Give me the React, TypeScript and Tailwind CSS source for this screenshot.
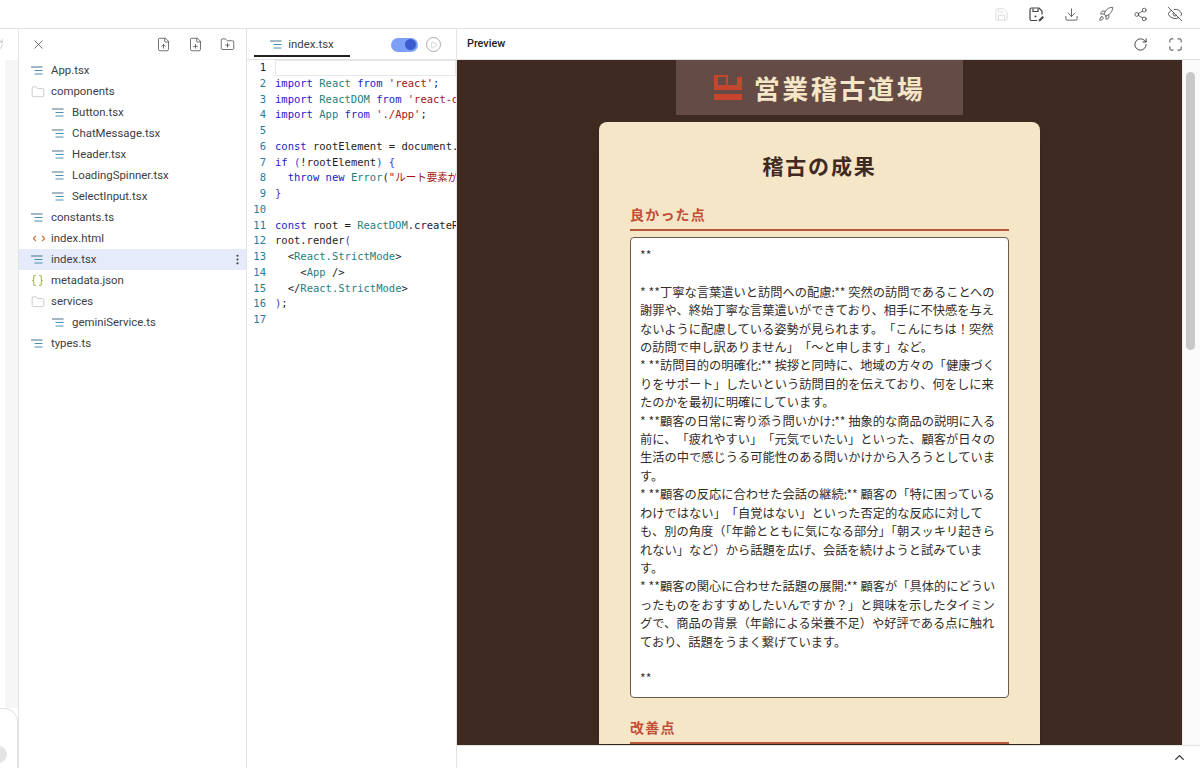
import { Braces, ChevronLeft, ChevronRight, ChevronUp, Download, EyeOff, FilePlus, FileUp, Folder, FolderPlus, Maximize, MoreVertical, Play, RotateCw, Rocket, Save, Share2, X } from "lucide-react";
import type { ReactNode } from "react";

const LinesIcon = () => (
  <svg width="13" height="9" viewBox="0 0 13 9" className="shrink-0" fill="none" strokeWidth="1.1">
    <path d="M0 1h11.5" stroke="#5a7f92" />
    <path d="M3.5 4.5h8M3.5 8h8" stroke="#4b92b0" />
  </svg>
);

const SaveEdit = () => (
  <svg width="17" height="17" viewBox="0 0 17 17" fill="none" stroke="#444" strokeWidth="1.2" className="shrink-0">
    <path d="M9 14.5H3.5a1.5 1.5 0 0 1-1.5-1.5V3.5A1.5 1.5 0 0 1 3.5 2h7.5l3 3v3.5" />
    <path d="M5 2.5v3h5v-3" />
    <circle cx="7.5" cy="10.5" r="1" fill="#444" stroke="none" />
    <path d="M10.5 15.5l.5-2 3.5-3.5 1.5 1.5-3.5 3.5z" fill="#444" stroke="none" />
  </svg>
);

type Row = { name: string; depth: number; kind: "ts" | "folder" | "html" | "json"; active?: boolean };
const rows: Row[] = [
  { name: "App.tsx", depth: 0, kind: "ts" },
  { name: "components", depth: 0, kind: "folder" },
  { name: "Button.tsx", depth: 1, kind: "ts" },
  { name: "ChatMessage.tsx", depth: 1, kind: "ts" },
  { name: "Header.tsx", depth: 1, kind: "ts" },
  { name: "LoadingSpinner.tsx", depth: 1, kind: "ts" },
  { name: "SelectInput.tsx", depth: 1, kind: "ts" },
  { name: "constants.ts", depth: 0, kind: "ts" },
  { name: "index.html", depth: 0, kind: "html" },
  { name: "index.tsx", depth: 0, kind: "ts", active: true },
  { name: "metadata.json", depth: 0, kind: "json" },
  { name: "services", depth: 0, kind: "folder" },
  { name: "geminiService.ts", depth: 1, kind: "ts" },
  { name: "types.ts", depth: 0, kind: "ts" },
];

const K = ({ children }: { children: ReactNode }) => <span className="text-[#2222c8]">{children}</span>;
const T = ({ children }: { children: ReactNode }) => <span className="text-[#267f7f]">{children}</span>;
const S = ({ children }: { children: ReactNode }) => <span className="text-[#a31515]">{children}</span>;
const B = ({ children }: { children: ReactNode }) => <span className="text-[#3a3ad0]">{children}</span>;

const code: ReactNode[] = [
  "",
  <><K>import</K> <T>React</T> <K>from</K> <S>'react'</S>;</>,
  <><K>import</K> <T>ReactDOM</T> <K>from</K> <S>'react-dom/client'</S>;</>,
  <><K>import</K> <T>App</T> <K>from</K> <S>'./App'</S>;</>,
  "",
  <><K>const</K> rootElement = document.getElementById(<S>'root'</S>);</>,
  <><K>if</K> <B>(</B>!rootElement<B>)</B> <B>{"{"}</B></>,
  <>{"  "}<K>throw</K> <K>new</K> <T>Error</T>(<S>"ルート要素が見つかりません"</S>);</>,
  <B>{"}"}</B>,
  "",
  <><K>const</K> root = <T>ReactDOM</T>.createRoot(rootElement);</>,
  <>root.render<B>(</B></>,
  <>{"  "}&lt;<T>React.StrictMode</T>&gt;</>,
  <>{"    "}&lt;<T>App</T> /&gt;</>,
  <>{"  "}&lt;/<T>React.StrictMode</T>&gt;</>,
  <><B>)</B>;</>,
  "",
];

const feedbackA = `**

* **丁寧な言葉遣いと訪問への配慮:** 突然の訪問であることへの謝罪や、終始丁寧な言葉遣いができており、相手に不快感を与えないように配慮している姿勢が見られます。「こんにちは！突然の訪問で申し訳ありません」「〜と申します」など。
* **訪問目的の明確化:** 挨拶と同時に、地域の方々の「健康づくりをサポート」したいという訪問目的を伝えており、何をしに来たのかを最初に明確にしています。
* **顧客の日常に寄り添う問いかけ:** 抽象的な商品の説明に入る前に、「疲れやすい」「元気でいたい」といった、顧客が日々の生活の中で感じうる可能性のある問いかけから入ろうとしています。
* **顧客の反応に合わせた会話の継続:** 顧客の「特に困っているわけではない」「自覚はない」といった否定的な反応に対しても、別の角度`;

const feedbackTrim = "（「年齢とともに気になる部分」「朝";

const feedbackB = `スッキリ起きられない」など）から話題を広げ、会話を続けようと試みています。
* **顧客の関心に合わせた話題の展開:** 顧客が「具体的にどういったものをおすすめしたいんですか？」と興味を示したタイミングで、商品の背景（年齢による栄養不足）や好評である点に触れており、話題をうまく繋げています。

**`;

const sans = "[font-family:Roboto,'Noto_Sans_CJK_JP',sans-serif]";

export default function App() {
  return (
    <div className={`flex h-[768px] w-[1200px] flex-col overflow-hidden bg-white text-[#3c4043] ${sans}`}>
      {/* top toolbar */}
      <div className="flex h-[29px] shrink-0 items-center justify-end gap-[19px] border-b border-[#e3e3e3] pr-[17px]">
        <Save size={15} strokeWidth={1.3} className="text-[#d5d5d5]" />
        <SaveEdit />
        <Download size={15} strokeWidth={1.3} className="text-[#444]" />
        <Rocket size={16} strokeWidth={1.2} className="text-[#444]" />
        <Share2 size={15} strokeWidth={1.3} className="text-[#444]" />
        <EyeOff size={16} strokeWidth={1.3} className="text-[#444]" />
      </div>

      <div className="flex min-h-0 flex-1">
        {/* sliver of the neighbouring panel */}
        <div className="flex w-[19px] shrink-0 flex-col border-r border-[#e3e3e3]">
          <div className="flex h-[31px] shrink-0 items-center overflow-hidden">
            <RotateCw size={13} strokeWidth={1.3} className="-ml-[9px] text-[#bbb]" />
          </div>
          <div className="ml-[5px] flex-1 bg-[#f6f6f6]" />
          <div className="flex h-[60px] shrink-0 items-end rounded-tr-[14px] border-t border-r border-[#e3e3e3] bg-white pb-[5px]">
            <div className="-ml-[10px] h-[17px] w-[17px] rounded-full bg-[#e4e4e4]" />
          </div>
        </div>

        {/* file tree */}
        <div className="flex w-[228px] shrink-0 flex-col border-r border-[#e3e3e3]">
          <div className="flex h-[31px] shrink-0 items-center pl-[12px] pr-[11px]">
            <X size={15} strokeWidth={1.2} className="text-[#444]" />
            <div className="ml-auto flex items-center gap-[17px]">
              <FileUp size={15} strokeWidth={1.2} className="text-[#444]" />
              <FilePlus size={15} strokeWidth={1.2} className="text-[#444]" />
              <FolderPlus size={15} strokeWidth={1.2} className="text-[#444]" />
            </div>
          </div>
          <div className="flex flex-col">
            {rows.map((r) => (
              <div
                key={r.name}
                className={`flex h-[21px] items-center text-[11.4px] ${r.depth ? "pl-[33px]" : "pl-[12px]"} ${r.active ? "bg-[#e6ebfb]" : ""}`}
              >
                <span className="flex w-[20px] shrink-0 items-center">
                  {r.kind === "ts" && <LinesIcon />}
                  {r.kind === "folder" && <Folder size={14} strokeWidth={1} className="text-[#aaa]" />}
                  {r.kind === "html" && (
                    <span className="-ml-[1px] flex text-[#c9713d]">
                      <ChevronLeft size={9} strokeWidth={3} />
                      <ChevronRight size={9} strokeWidth={3} />
                    </span>
                  )}
                  {r.kind === "json" && <Braces size={13} strokeWidth={2} className="text-[#a8b84a]" />}
                </span>
                <span>{r.name}</span>
                {r.active && <MoreVertical size={13} strokeWidth={2} className="ml-auto mr-[2px] text-[#444]" />}
              </div>
            ))}
          </div>
        </div>

        {/* editor */}
        <div className="flex w-[210px] shrink-0 flex-col overflow-hidden border-r border-[#e3e3e3]">
          <div className="flex h-[31px] shrink-0 items-end border-b border-[#e3e3e3] pb-[2px] pl-[7px] pr-[15px]">
            <div className="flex h-[28px] w-[96px] items-center justify-center gap-[5px] border-b-2 border-[#222] pt-[5px] text-[11.4px]">
              <LinesIcon />
              index.tsx
            </div>
            <div className="mb-[5px] ml-auto flex items-center gap-[8px]">
              <div className="flex h-[14px] w-[27px] items-center justify-end rounded-full bg-[#7d9ff5] pr-[2px]">
                <div className="h-[11px] w-[11px] rounded-full bg-[#3b5bd0]" />
              </div>
              <div className="flex h-[15px] w-[15px] items-center justify-center rounded-full border border-[#aaa]">
                <Play size={8} strokeWidth={1.5} className="ml-[1px] text-[#aaa]" />
              </div>
            </div>
          </div>
          <div className="flex min-h-0 flex-1 overflow-hidden text-[10.5px] leading-[15.75px] [font-family:'DejaVu_Sans_Mono','Noto_Sans_CJK_JP',monospace]">
            <div className="w-[28px] shrink-0 pr-[9px] text-right text-[#2b7a96]">
              {code.map((_, i) => (
                <div key={i} className={i === 0 ? "text-[#0b216f]" : ""}>{i + 1}</div>
              ))}
            </div>
            <div className="min-w-0 flex-1 overflow-hidden">
              {code.map((c, i) => (
                <div
                  key={i}
                  className={`h-[15.75px] whitespace-pre text-[#1c1c1c] ${i === 0 ? "border border-[#e8e8e8]" : ""}`}
                >
                  {c}
                </div>
              ))}
            </div>
          </div>
        </div>

        {/* preview */}
        <div className="flex min-w-0 flex-1 flex-col">
          <div className="flex h-[31px] shrink-0 items-center border-b border-[#e3e3e3] pl-[10px] pr-[17px]">
            <span className="text-[10.8px] font-medium text-[#222]">Preview</span>
            <RotateCw size={15} strokeWidth={1.5} className="ml-auto text-[#333]" />
            <Maximize size={15} strokeWidth={1.5} className="ml-[20px] text-[#333]" />
          </div>
          <div className="flex min-h-0 flex-1">
            <div className="flex min-w-0 flex-1 flex-col items-center overflow-hidden bg-[#3e2a20]">
              <div className="flex h-[55px] w-[287px] shrink-0 items-center justify-center gap-[12px] bg-[#654b45]">
                <svg width="28" height="25" viewBox="0 0 28 25" className="shrink-0">
                  <path fill="#c8452d" fillRule="evenodd" d="M0 0h14v10h9V2h5v13H0zM4 2v8h8V2zM0 19h28v6H0z" />
                </svg>
                <span className="text-[26px] font-bold leading-none tracking-[2.6px] text-[#f5e6c8] [font-family:'Noto_Sans_CJK_JP',serif]">営業稽古道場</span>
              </div>
              <div className="mt-[7px] w-[441px] shrink-0 rounded-t-[8px] bg-[#f5e6c8] px-[31px] pt-[28px] shadow-lg [font-family:'Noto_Sans_CJK_JP',sans-serif]">
                <h2 className="text-center text-[21px] font-bold leading-[30px] tracking-[1.8px] text-[#3e2a20]">稽古の成果</h2>
                <h3 className="mt-[24px] border-b-2 border-[#b5583a] pb-[4px] text-[14px] font-bold leading-[21px] tracking-[1.2px] text-[#c24e35]">良かった点</h3>
                <div className="mt-[6px] h-[461px] whitespace-pre-wrap rounded-[4px] border border-[#6d5a4e] bg-white px-[9px] pt-[8px] text-[12.25px] leading-[18.4px] text-[#332d2a] [text-spacing-trim:space-all]">
                  {feedbackA}
                  <span className="[text-spacing-trim:normal]">{feedbackTrim}</span>
                  {feedbackB}
                </div>
                <h3 className="mt-[19px] border-b-2 border-[#b5583a] pb-[4px] text-[14px] font-bold leading-[21px] tracking-[1.2px] text-[#c24e35]">改善点</h3>
              </div>
            </div>
            <div className="w-[18px] shrink-0 border-l border-[#eeeeee] bg-[#fafafa] pl-[3px] pt-[12px]">
              <div className="h-[278px] w-[9px] rounded-full bg-[#c8c8c8]" />
            </div>
          </div>
          <div className="flex h-[23px] shrink-0 items-center justify-end border-t border-[#e3e3e3] pr-[13px]">
            <ChevronUp size={15} strokeWidth={2.2} className="text-[#333]" />
          </div>
        </div>
      </div>
    </div>
  );
}
